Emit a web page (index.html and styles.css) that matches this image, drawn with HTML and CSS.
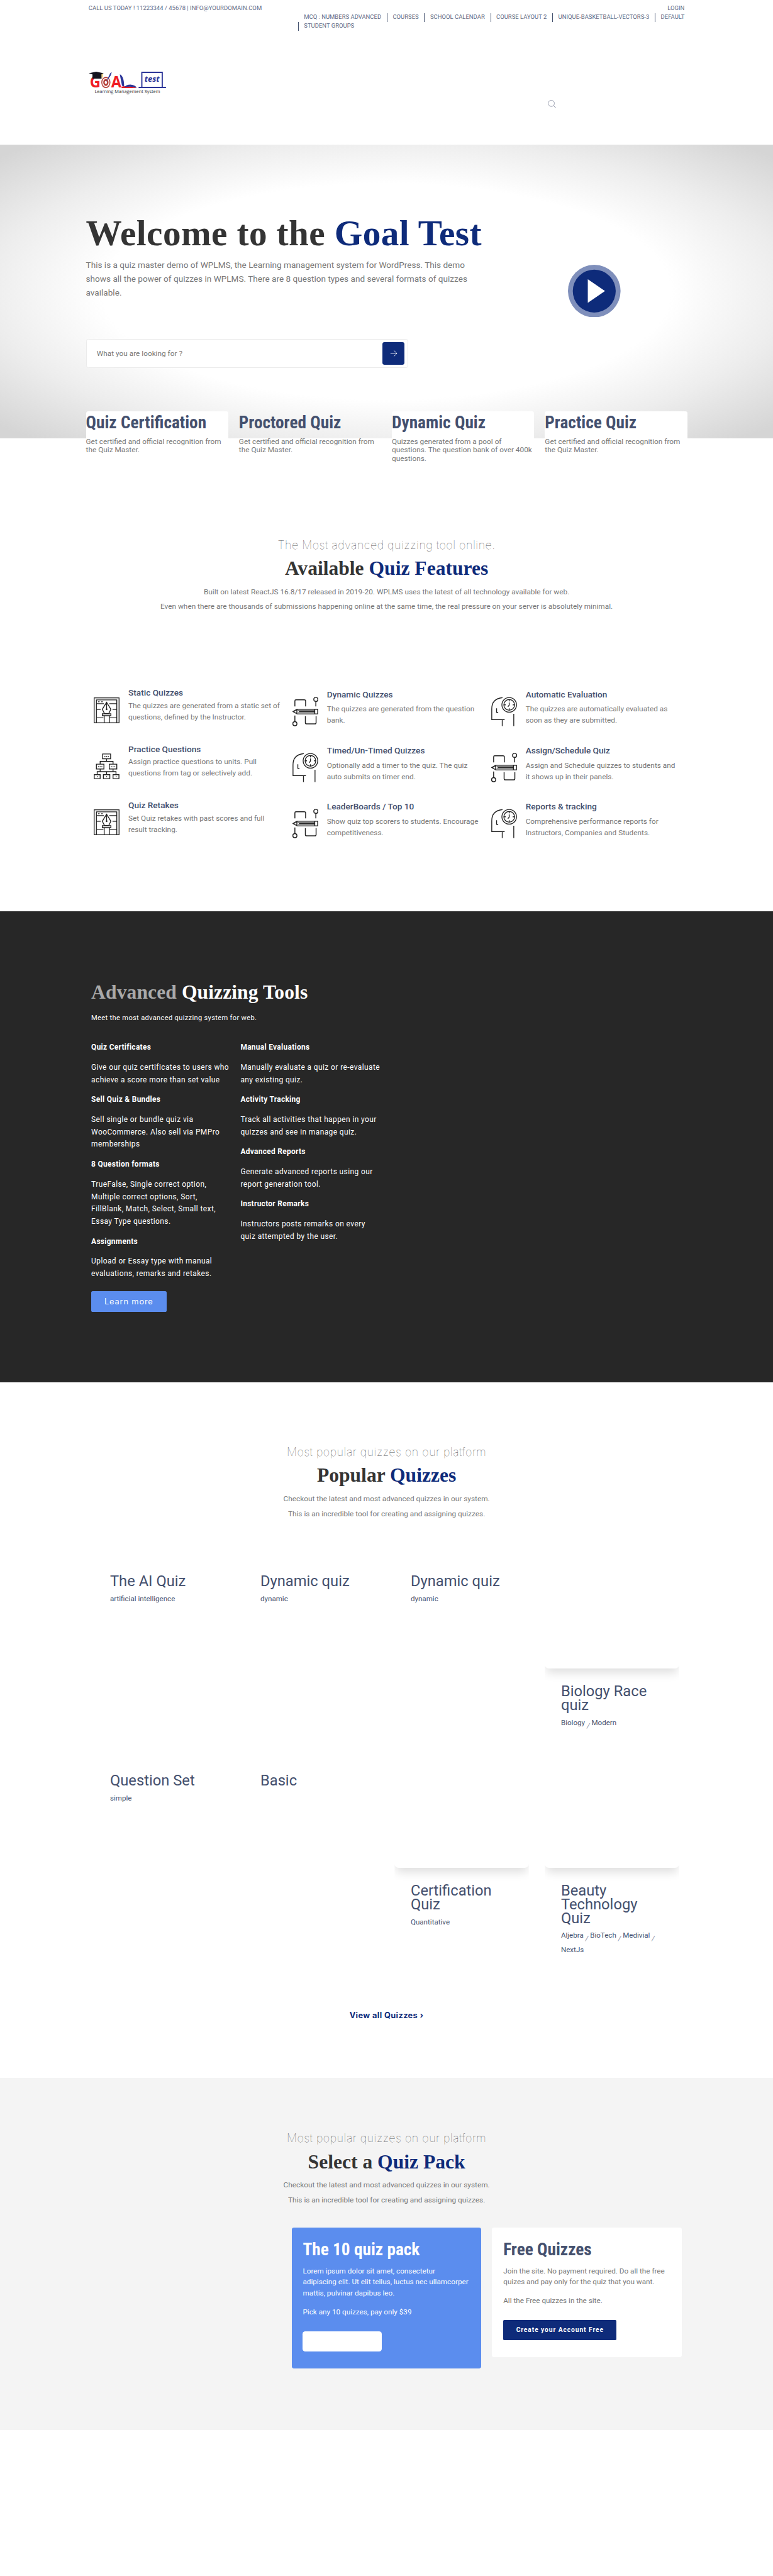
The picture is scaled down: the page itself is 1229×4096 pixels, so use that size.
FILE: index.html
```html
<!DOCTYPE html>
<html lang="en">
<head>
<meta charset="utf-8">
<title>Goal Test</title>
<link rel="stylesheet" href="styles.css">
</head>
<body>
<svg class="defs" width="0" height="0" aria-hidden="true">
  <symbol id="i-pen" viewBox="0 0 48 48">
    <g fill="none" stroke="#222" stroke-width="1.6">
      <rect x=".8" y=".8" width="46.4" height="46.4"/>
      <path d="M5 47V4.500H43V47M5 11.500H19M29 11.500H43M5 22H13M35 22H43M5 38H18M30 38H43M24 9L16 22L20 30H28L32 22ZM24 10V22M16 30.500H32V34H16ZM19.500 34V47M29 34V47"/>
      <path d="M8 8H11M14 8H17"/>
    </g>
    <circle cx="24" cy="22" r="1.600" fill="#222"/>
  </symbol>
  <symbol id="i-tree" viewBox="0 0 48 48">
    <g fill="none" stroke="#222" stroke-width="1.600">
      <path d="M16.500 1H31.500V10H16.500ZM5 20H19V29H5ZM29 20H43V29H29ZM1 39.500H12V47H1ZM18 39.500H30V47H18ZM36 39.500H47V47H36Z"/>
      <path d="M24 10V15M12 20V15H36V20M12 29V34M36 29V34M6.500 39.500V34H41.500V39.500M24 34V39.500"/>
      <path stroke-dasharray="1.600 1.600" d="M20 5.500H28M8 24.500H16M32 24.500H40"/>
      <path d="M6 43.300H7.500M23.300 43.300H24.800M41 43.300H42.500"/>
    </g>
  </symbol>
  <symbol id="i-pencil" viewBox="0 0 48 55">
    <g fill="none" stroke="#222" stroke-width="1.700">
      <path d="M4.500 18V7.500Q4.500 5.500 6.500 5.500H22Q24.500 5.500 24.500 8V18M43.500 18V8.500M4.500 35V46M24 36V48Q24 50.500 26.500 50.500H41.500Q44 50.500 44 48V36"/>
      <circle cx="43.500" cy="4.800" r="3.800"/><circle cx="4.500" cy="50" r="3.800"/>
      <path d="M1 27.500L8.500 23.200H47V31.800H8.500ZM8.500 23.200L8 31.800M12 27.500H41M41.500 23.200V31.800M1 27.500H4"/>
      <path d="M10 25.500H41M10 29.600H41" stroke-width="1"/>
    </g>
  </symbol>
  <symbol id="i-head" viewBox="0 0 48 54">
    <g fill="none" stroke="#222" stroke-width="1.600">
      <path d="M21 1Q1 3 1 22V42H25M20.500 42V54M42 31V54M10 21V28.500H13"/>
      <circle cx="33.500" cy="14.500" r="13.600"/><circle cx="33.500" cy="14.500" r="10"/>
      <path d="M33.500 4.500V8M33.500 21V24.500M23.500 14.500H27M40 14.500H43.500M33.500 10V15L31 18"/>
    </g>
  </symbol>
</svg>

<div class="page">
  <header class="header">
    <div class="topbar">
      <p class="contact">CALL US TODAY ! 11223344 / 45678 | INFO@YOURDOMAIN.COM</p>
      <div class="topnav">
        <a class="login">LOGIN</a>
        <ul class="toplinks">
          <li>MCQ : NUMBERS ADVANCED</li><li>COURSES</li><li>SCHOOL CALENDAR</li><li>COURSE LAYOUT 2</li><li>UNIQUE-BASKETBALL-VECTORS-3</li><li>DEFAULT</li>
        </ul>
        <ul class="toplinks second">
          <li>STUDENT GROUPS</li>
        </ul>
      </div>
    </div>
    <div class="brandbar">
      <svg class="logo" viewBox="0 0 144 42">
        <text x="2" y="29.500" class="logo-g" textLength="20" lengthAdjust="spacingAndGlyphs">G</text>
        <ellipse cx="32" cy="20" rx="8.500" ry="10.500" fill="#b5423a"/>
        <ellipse cx="32" cy="20" rx="5.800" ry="7.500" fill="none" stroke="#fff" stroke-width="1.800"/>
        <ellipse cx="32" cy="20" rx="2.200" ry="2.800" fill="#fff"/>
        <path d="M32 20L40 3L43 1L41 7Z" fill="#2b3a9b"/>
        <text x="42" y="29.500" class="logo-g" textLength="19" lengthAdjust="spacingAndGlyphs">A</text>
        <path d="M58 5Q66 8 66 28L62 26Z" fill="#2b3599"/>
        <path d="M60 28Q75 25 90 30.500H62Z" fill="#e91c24"/>
        <path d="M66 29Q70 24 78 24Q88 25 89 30Q78 26 66 29Z" fill="#2b3599"/>
        <path d="M0 3L14 0L28 3L24 5V13H7V5Z" fill="#14141e"/>
        <path d="M25 4V11" stroke="#e0b020" stroke-width="1.500"/>
        <path d="M99 28V1.200H137V28" fill="none" stroke="#2b3599" stroke-width="2.200"/>
        <path d="M93 28H144V30.500H93Z" fill="#2b3599"/>
        <text x="104" y="19" class="logo-t" textLength="28" lengthAdjust="spacingAndGlyphs">test</text>
        <text x="11" y="39.500" class="logo-s" textLength="122" lengthAdjust="spacingAndGlyphs">Learning Management System</text>
      </svg>
      <svg class="search-icon" viewBox="0 0 16 16" fill="none" stroke="#8b90a3" stroke-width="1"><circle cx="6.500" cy="6.300" r="5.700"/><path d="M10.500 10.500L15.500 15.500"/></svg>
    </div>
  </header>

  <section class="hero">
    <div class="hero-main">
      <div class="hero-copy">
        <h1>Welcome to the <span>Goal Test</span></h1>
        <p>This is a quiz master demo of WPLMS, the Learning management system for WordPress. This demo<br>shows all the power of quizzes in WPLMS. There are 8 question types and several formats of quizzes<br>available.</p>
        <div class="search">
          <span>What you are looking for ?</span>
          <button class="go" aria-label="Search"><svg width="14" height="14" viewBox="0 0 14 14" fill="none" stroke="#fff" stroke-width="1"><path d="M1 7H13M7.500 1.500L13 7L7.500 12.500"/></svg></button>
        </div>
      </div>
      <svg class="play" viewBox="0 0 98 98"><circle cx="49" cy="49" r="49" fill="#7f8fbb"/><circle cx="49" cy="49" r="40" fill="#0e2b7a"/><path d="M37 27V71L69 49Z" fill="#fff"/></svg>
    </div>
    <div class="cards">
      <div class="card"><h3>Quiz Certification</h3><p>Get certified and official recognition from<br>the Quiz Master.</p></div>
      <div class="card clear"><h3>Proctored Quiz</h3><p>Get certified and official recognition from<br>the Quiz Master.</p></div>
      <div class="card"><h3>Dynamic Quiz</h3><p>Quizzes generated from a pool of<br>questions. The question bank of over 400k<br>questions.</p></div>
      <div class="card"><h3>Practice Quiz</h3><p>Get certified and official recognition from<br>the Quiz Master.</p></div>
    </div>
  </section>

  <section class="features">
    <div class="intro">
      <h4>The Most advanced quizzing tool online.</h4>
      <h2>Available <span>Quiz Features</span></h2>
      <p>Built on latest ReactJS 16.8/17 released in 2019-20. WPLMS uses the latest of all technology available for web.</p>
      <p>Even when there are thousands of submissions happening online at the same time, the real pressure on your server is absolutely minimal.</p>
    </div>
    <div class="feature-grid">
      <div class="feature"><svg class="i-sq"><use href="#i-pen"/></svg><div><h5>Static Quizzes</h5><p>The quizzes are generated from a static set of<br>questions, defined by the Instructor.</p></div></div>
      <div class="feature low"><svg><use href="#i-pencil"/></svg><div><h5>Dynamic Quizzes</h5><p>The quizzes are generated from the question<br>bank.</p></div></div>
      <div class="feature low"><svg><use href="#i-head"/></svg><div><h5>Automatic Evaluation</h5><p>The quizzes are automatically evaluated as<br>soon as they are submitted.</p></div></div>
      <div class="feature"><svg class="i-sq"><use href="#i-tree"/></svg><div><h5>Practice Questions</h5><p>Assign practice questions to units. Pull<br>questions from tag or selectively add.</p></div></div>
      <div class="feature low"><svg><use href="#i-head"/></svg><div><h5>Timed/Un-Timed Quizzes</h5><p>Optionally add a timer to the quiz. The quiz<br>auto submits on timer end.</p></div></div>
      <div class="feature low"><svg><use href="#i-pencil"/></svg><div><h5>Assign/Schedule Quiz</h5><p>Assign and Schedule quizzes to students and<br>it shows up in their panels.</p></div></div>
      <div class="feature"><svg class="i-sq"><use href="#i-pen"/></svg><div><h5>Quiz Retakes</h5><p>Set Quiz retakes with past scores and full<br>result tracking.</p></div></div>
      <div class="feature low"><svg><use href="#i-pencil"/></svg><div><h5>LeaderBoards / Top 10</h5><p>Show quiz top scorers to students. Encourage<br>competitiveness.</p></div></div>
      <div class="feature low"><svg><use href="#i-head"/></svg><div><h5>Reports &amp; tracking</h5><p>Comprehensive performance reports for<br>Instructors, Companies and Students.</p></div></div>
    </div>
  </section>

  <section class="tools">
    <h2><span>Advanced</span> Quizzing Tools</h2>
    <p class="lead">Meet the most advanced quizzing system for web.</p>
    <div class="tool-cols">
      <div>
        <h5>Quiz Certificates</h5><p>Give our quiz certificates to users who<br>achieve a score more than set value</p>
        <h5>Sell Quiz &amp; Bundles</h5><p>Sell single or bundle quiz via<br>WooCommerce. Also sell via PMPro<br>memberships</p>
        <h5>8 Question formats</h5><p>TrueFalse, Single correct option,<br>Multiple correct options, Sort,<br>FillBlank, Match, Select, Small text,<br>Essay Type questions.</p>
        <h5>Assignments</h5><p>Upload or Essay type with manual<br>evaluations, remarks and retakes.</p>
      </div>
      <div>
        <h5>Manual Evaluations</h5><p>Manually evaluate a quiz or re-evaluate<br>any existing quiz.</p>
        <h5>Activity Tracking</h5><p>Track all activities that happen in your<br>quizzes and see in manage quiz.</p>
        <h5>Advanced Reports</h5><p>Generate advanced reports using our<br>report generation tool.</p>
        <h5>Instructor Remarks</h5><p>Instructors posts remarks on every<br>quiz attempted by the user.</p>
      </div>
    </div>
    <a class="learn">Learn more</a>
  </section>

  <section class="popular">
    <div class="intro">
      <h4>Most popular quizzes on our platform</h4>
      <h2>Popular <span>Quizzes</span></h2>
      <p>Checkout the latest and most advanced quizzes in our system.</p>
      <p>This is an incredible tool for creating and assigning quizzes.</p>
    </div>
    <div class="quiz-grid">
      <div class="quiz"><h3>The AI Quiz</h3><p>artificial intelligence</p></div>
      <div class="quiz"><h3>Dynamic quiz</h3><p>dynamic</p></div>
      <div class="quiz"><h3>Dynamic quiz</h3><p>dynamic</p></div>
      <div class="quiz"><div class="thumb"></div><h3>Biology Race<br>quiz</h3><p>Biology <i>/</i> Modern</p></div>
      <div class="quiz"><h3>Question Set</h3><p>simple</p></div>
      <div class="quiz"><h3>Basic</h3></div>
      <div class="quiz"><div class="thumb"></div><h3>Certification<br>Quiz</h3><p>Quantitative</p></div>
      <div class="quiz"><div class="thumb"></div><h3>Beauty<br>Technology<br>Quiz</h3><p>Aljebra <i>/</i> BioTech <i>/</i> Medivial <i>/</i><br>NextJs</p></div>
    </div>
    <a class="view-all">View all Quizzes ›</a>
  </section>

  <section class="packs">
    <div class="intro">
      <h4>Most popular quizzes on our platform</h4>
      <h2>Select a <span>Quiz Pack</span></h2>
      <p>Checkout the latest and most advanced quizzes in our system.</p>
      <p>This is an incredible tool for creating and assigning quizzes.</p>
    </div>
    <div class="pack-row">
      <div class="pack blue"><h3>The 10 quiz pack</h3><p>Lorem ipsum dolor sit amet, consectetur<br>adipiscing elit. Ut elit tellus, luctus nec ullamcorper<br>mattis, pulvinar dapibus leo.</p><p>Pick any 10 quizzes, pay only $39</p><a class="buy"></a></div>
      <div class="pack"><h3>Free Quizzes</h3><p>Join the site. No payment required. Do all the free<br>quizes and pay only for the quiz that you want.</p><p>All the Free quizzes in the site.</p><a class="join">Create your Account Free</a></div>
    </div>
  </section>
</div>
</body>
</html>
```
FILE: styles.css
```css
* { box-sizing: border-box; margin: 0; padding: 0; }
body { background: #fff; overflow-x: hidden; }
.defs { display: block; height: 0; }
.page {
  width: 1440px; height: 4799px; zoom: 0.8536;
  font-family: Roboto, "Liberation Sans", sans-serif;
  font-size: 13.86px; color: #777; white-space: nowrap; overflow: hidden;
}
h1, h2 { font-family: "Liberation Serif", serif; font-weight: 700; color: #343434; }
h1 span, h2 span { color: #0e2b7a; }
h2 { font-size: 37px; line-height: 40px; }

/* header */
.header { height: 269px; padding: 0 165px; font-size: 11.1px; color: #5f6b86; }
.topbar { display: flex; justify-content: space-between; height: 134px; padding-top: 7px; margin-right: -1px; }
.contact { line-height: 16px; letter-spacing: 0.03px; }
.topnav { width: 721px; }
.login { display: block; text-align: right; line-height: 16px; padding-right: 1px; }
.toplinks { display: flex; justify-content: space-between; list-style: none; padding: 2px 1px 0 0; }
.toplinks li { height: 16px; line-height: 15px; padding: 0 0 0 10px; border-left: 1px solid #45536f; }
.toplinks li:first-child { border-left-color: transparent; }
.toplinks.second { padding-top: 0; }
.toplinks.second li { height: 17px; line-height: 14px; border-left-color: #45536f; }
.brandbar { display: flex; align-items: flex-start; }
.logo { width: 144px; height: 42px; }
.logo-g { font: 700 29px "Open Sans", sans-serif; fill: #f01c24; }
.logo-t { font: italic 700 15px "Open Sans", sans-serif; fill: #2b3599; }
.logo-s { font: 9px "Open Sans", sans-serif; fill: #333; }
.search-icon { width: 16px; height: 16px; margin: 52px 0 0 711px; }

/* hero */
.hero {
  height: 547px; padding: 125.4px 160px 0;
  background: radial-gradient(ellipse farthest-corner at 50% 50%, #fff 52%, #ededed 73%, #d5d5d5 96%);
}
.hero-main { display: flex; }
.hero-copy { width: 898px; }
h1 { font-size: 67px; line-height: 80px; letter-spacing: 0.48px; }
.hero-copy p { margin-top: 7.5px; font-size: 15.94px; line-height: 25.5px; }
.search {
  display: flex; align-items: center; justify-content: space-between;
  width: 600px; height: 53px; margin-top: 73.5px; padding: 0 5px 0 19px;
  border: 1px solid #ebebeb; border-radius: 4px; background: #fff;
}
.go { display: flex; align-items: center; justify-content: center; width: 42px; height: 42px; border: 0; border-radius: 4px; background: #0e2b7a; }
.play { width: 98px; height: 98px; margin-top: 98.6px; }
.cards { display: grid; grid-template-columns: repeat(4, 265px); gap: 20px; margin-top: 81px; }
.card { height: 51px; border-radius: 4px 4px 0 0; background: #fff; }
.card.clear { background: none; }
.card h3 { font: 700 32px/44px "Roboto Condensed", Roboto, sans-serif; color: #44506e; }
.card p { margin-top: 5px; line-height: 15.8px; }

/* centred section intro */
.intro { text-align: center; }
.intro h4 { font: 100 21px/30px Inter, sans-serif; letter-spacing: 0.58px; color: #555; }
.intro h2 { margin: 9.5px 0 13px; }
.intro p { line-height: 21px; }
.intro p + p { margin-top: 7px; }

/* features */
.features { height: 882px; padding-top: 184px; }
.feature-grid { display: grid; grid-template-columns: repeat(3, 370px); grid-auto-rows: 104.5px; margin: 139.5px 0 0 175px; }
.feature { display: flex; gap: 16px; }
.feature svg { width: 48px; height: 55px; margin-top: 17px; }
.feature svg.i-sq { height: 48px; margin-top: 18px; }
.feature h5 { font-size: 16px; font-weight: 500; line-height: 20px; color: #44506e; }
.feature p { margin-top: 4.5px; line-height: 21px; }
.feature.low h5 { margin-top: 3px; }
.feature.low p { margin-top: 7.5px; }

/* dark tools */
.tools { height: 877px; padding: 131px 170px 0; background: #272727; color: #fff; }
.tools h2 { color: #fff; letter-spacing: 0.1px; }
.tools h2 span { color: #a9a9a9; }
.lead { margin-top: 17px; font-size: 13px; line-height: 20px; letter-spacing: 0.4px; }
.tool-cols { display: grid; grid-template-columns: 278px 278px; margin-top: 34.5px; font-size: 14px; line-height: 23.1px; letter-spacing: 0.49px; }
.tool-cols h5 { font-size: 14px; font-weight: 700; letter-spacing: 0.35px; margin-bottom: 14px; }
.tool-cols p + h5 { margin-top: 14px; }
.learn {
  display: block; width: 140px; height: 39px; margin-top: 20px; border-radius: 3px;
  background: #5b8dee; color: #fff; text-align: center; font: 400 15px/40px Inter, sans-serif; letter-spacing: 1px;
}

/* popular quizzes */
.popular { height: 1296px; padding-top: 114.5px; background: #fff; }
.quiz-grid { display: grid; grid-template-columns: repeat(4, 250px); column-gap: 30px; grid-auto-rows: 371.5px; margin: 72px 0 0 175px; color: #44506e; }
.thumb { height: 205.5px; border-radius: 0 0 8px 8px; box-shadow: 0 12px 18px -4px rgba(0, 0, 0, 0.13); clip-path: inset(0 0 -36px 0); }
.quiz h3 { padding: 30.5px 0 0 30px; font-size: 27.8px; font-weight: 400; line-height: 25.3px; }
.quiz p { margin-top: 6px; padding-left: 30px; font-size: 13.6px; line-height: 26px; }
.quiz i { display: inline-block; color: #8b90a3; transform: translateY(6px); }
.view-all { display: block; margin-top: 98px; text-align: center; font: 700 15px/20px Inter, sans-serif; letter-spacing: 0.45px; color: #0e2b7a; }

/* packs */
.packs { height: 656px; padding-top: 97px; background: #f4f4f4; }
.pack-row { display: flex; align-items: flex-start; gap: 20px; margin: 39.5px 0 0 543px; }
.pack { width: 353.5px; height: 242px; padding: 25px 21px 0; border-radius: 4px; background: #fff; }
.pack h3 { margin-bottom: 11.5px; font: 700 32px/35px "Roboto Condensed", Roboto, sans-serif; color: #44506e; }
.pack p { line-height: 21px; font-size: 13.75px; }
.pack p + p { margin-top: 14px; }
.pack.blue { height: 263px; background: #5b8dee; color: #fff; }
.pack.blue h3 { color: #fff; }
.buy { display: block; width: 147px; height: 38px; margin-top: 24.5px; border-radius: 5px; background: #fff; }
.join {
  display: block; width: 211px; height: 38px; margin-top: 24px; border-radius: 2px; background: #0e2b7a;
  color: #fff; text-align: center; font-size: 12px; font-weight: 700; line-height: 38px; letter-spacing: 1.1px;
}
```
